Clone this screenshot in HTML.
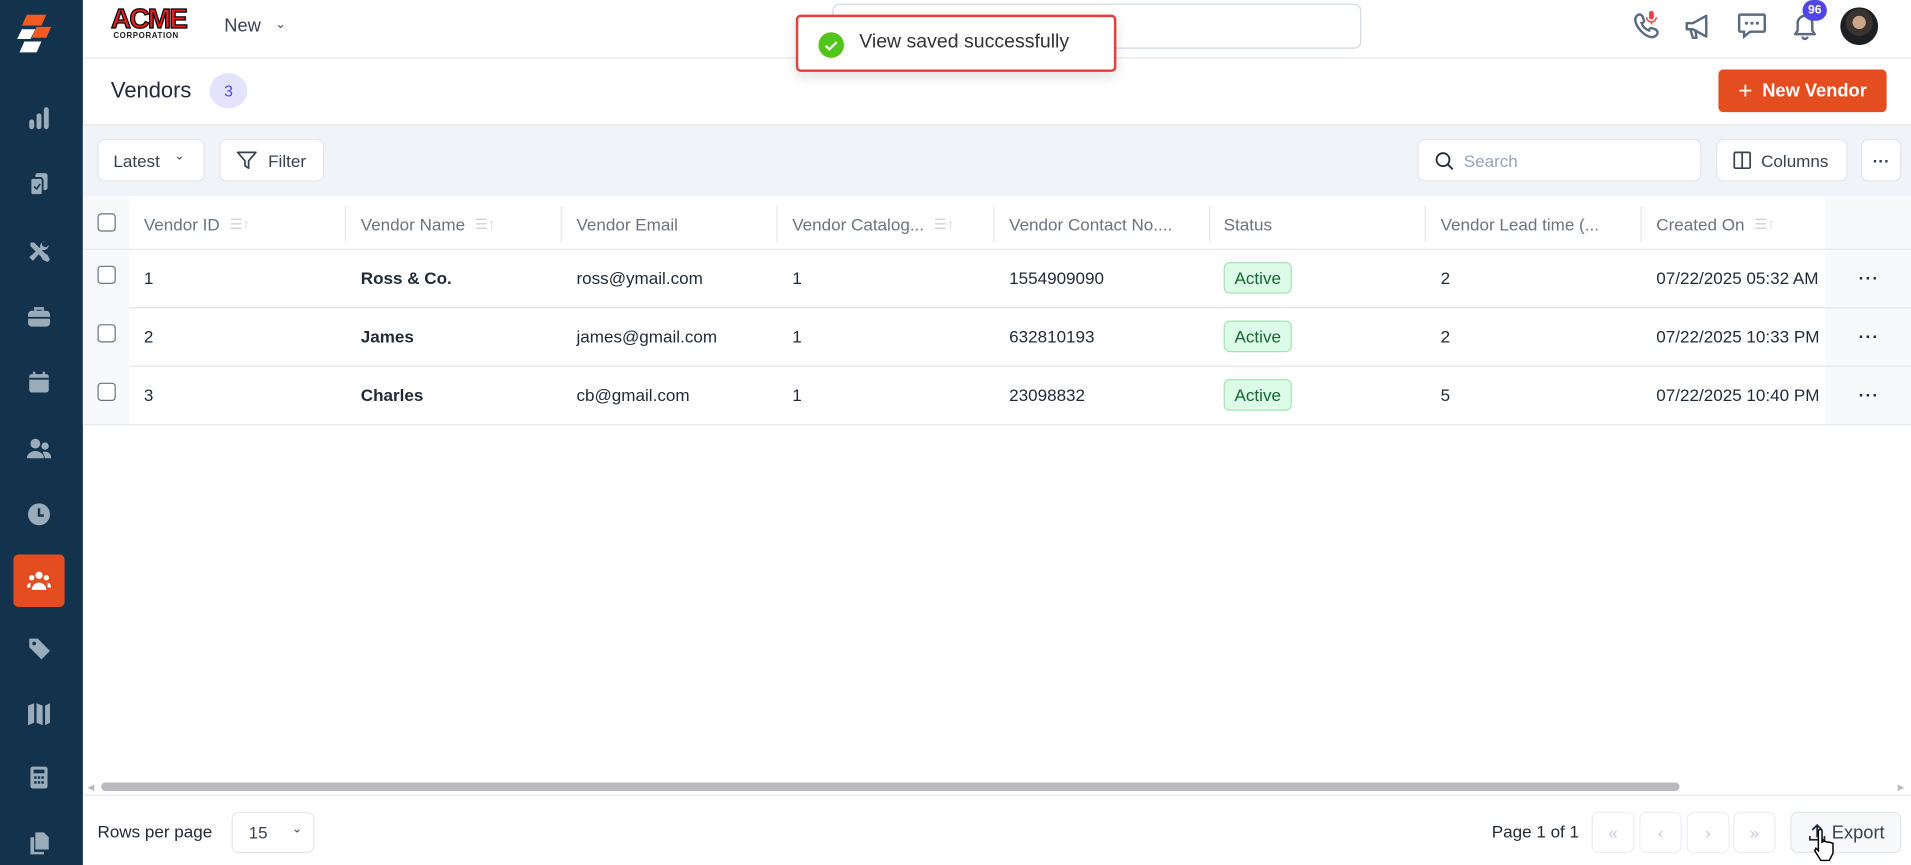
<!DOCTYPE html>
<html><head><meta charset="utf-8"><style>
*{box-sizing:border-box;margin:0;padding:0}
html,body{width:1911px;height:865px;overflow:hidden;background:#fff;font-family:"Liberation Sans",Arial,sans-serif;color:#1f2937}
#w{position:absolute;left:0;top:0;width:1568px;height:710px;transform:scale(1.21875);transform-origin:0 0;overflow:hidden}
.a{position:absolute}
.sb{left:0;top:0;width:68px;height:710px;background:#13334c}
.ic{position:absolute;left:22px;width:20px;height:20px;fill:#9aabba}
.btn{position:absolute;background:#fff;border:1px solid #e2e6ec;border-radius:6px;font-size:14px;color:#374151;display:flex;align-items:center}
.th{position:absolute;top:176px;font-size:14px;color:#6b7280;display:flex;align-items:center;gap:8px}
.sep{position:absolute;top:169px;width:1px;height:30px;background:#e5e7eb}
.td{position:absolute;font-size:14px;color:#1f2937}
.nm{font-weight:bold;color:#1f2937}
.cb{position:absolute;left:80px;width:15px;height:15px;border:1.3px solid #6b7280;border-radius:3px;background:#fff}
.act{position:absolute;left:1004px;width:56px;height:26px;border:1px solid #a7e3b7;background:#dcfce7;color:#166534;border-radius:5px;font-size:14px;text-align:center;line-height:24px}
.dots{position:absolute;left:1525px;font-size:14px;font-weight:bold;letter-spacing:1px}
.pg{position:absolute;top:666px;width:35px;height:34px;border:1px solid #eceef2;border-radius:6px;color:#c5cbd5;text-align:center;line-height:32px;font-size:14px}
.sort{display:inline-block;color:#cbd5e1;font-size:12px}
.dt{width:136px;overflow:hidden;white-space:nowrap}
</style></head><body><div id="w">
<div class="a sb"></div>
<svg class="a" style="left:12px;top:12px" width="40" height="40" viewBox="0 0 40 40"><polygon points="10,0 26,0 22,9 6,9" fill="#f15a22"/><polygon points="18,10 30,10 26,19 14,19" fill="#f15a22"/><polygon points="6,12 17,12 13,20 2,20" fill="#fff"/><polygon points="8,22 22,22 18,31 4,31" fill="#fff"/></svg>
<svg class="ic" style="top:87px" viewBox="0 0 20 20"><rect x="2" y="11" width="4" height="8" rx="2"/><rect x="8" y="6" width="4" height="13" rx="2"/><rect x="14" y="1" width="4" height="18" rx="2"/></svg>
<svg class="ic" style="top:141px" viewBox="0 0 20 20"><rect x="7" y="1" width="10" height="14" rx="2"/><rect x="3" y="5" width="10" height="14" rx="2" stroke="#13334c" stroke-width="1.5"/><path d="M6 12l2 2 3-4" stroke="#13334c" stroke-width="1.3" fill="none"/></svg>
<svg class="ic" style="top:196px" viewBox="0 0 20 20"><path d="M3 3l3 0 9 9 2 1 2 4-2 2-4-2-1-2-9-9z"/><path d="M15 2a4 4 0 0 0-4 5L2 15l3 3 8-9a4 4 0 0 0 5-4l-2 2-3-1-1-3z"/></svg>
<svg class="ic" style="top:250px" viewBox="0 0 20 20"><rect x="1" y="5" width="18" height="13" rx="3"/><path d="M7 5V3h6v2" stroke="#9aabba" stroke-width="2" fill="none"/><rect x="1" y="10" width="18" height="1.5" fill="#13334c"/></svg>
<svg class="ic" style="top:304px" viewBox="0 0 20 20"><rect x="2" y="3" width="16" height="15" rx="2"/><rect x="5" y="1" width="2" height="4"/><rect x="13" y="1" width="2" height="4"/><rect x="2" y="6" width="16" height="1.5" fill="#13334c"/></svg>
<svg class="ic" style="top:358px" viewBox="0 0 20 20"><circle cx="7" cy="6" r="4"/><path d="M0 18a7 6 0 0 1 14 0z"/><circle cx="15" cy="8" r="3"/><path d="M15 18h5a5 5 0 0 0-7-5z"/></svg>
<svg class="ic" style="top:412px" viewBox="0 0 20 20"><circle cx="10" cy="10" r="9"/><path d="M10 5v6h4" stroke="#13334c" stroke-width="2" fill="none"/></svg>
<div class="a" style="left:11px;top:455px;width:42px;height:43px;background:#e44d1f;border-radius:4px"></div>
<svg class="ic" style="top:467px;fill:#fff" viewBox="0 0 20 20"><circle cx="10" cy="5" r="3"/><circle cx="4" cy="7" r="2.2"/><circle cx="16" cy="7" r="2.2"/><path d="M4 17a6 6 0 0 1 12 0z"/><path d="M0 15a4 4 0 0 1 3-4l0 4z M20 15a4 4 0 0 0-3-4l0 4z"/></svg>
<svg class="ic" style="top:522px" viewBox="0 0 20 20"><path d="M2 2h7l10 10-7 7L2 9z"/><circle cx="6" cy="6" r="1.5" fill="#13334c"/></svg>
<svg class="ic" style="top:575px" viewBox="0 0 20 20"><path d="M1 4l5-2v16l-5 2z M8 2l5 2v16l-5-2z M15 4l4-2v16l-4 2z"/></svg>
<svg class="ic" style="top:628px" viewBox="0 0 20 20"><rect x="3" y="1" width="14" height="18" rx="2"/><rect x="5.5" y="3.5" width="9" height="3" fill="#13334c"/><g fill="#13334c"><rect x="6" y="9" width="2" height="2"/><rect x="9" y="9" width="2" height="2"/><rect x="12" y="9" width="2" height="2"/><rect x="6" y="13" width="2" height="2"/><rect x="9" y="13" width="2" height="2"/><rect x="12" y="13" width="2" height="2"/></g></svg>
<svg class="ic" style="top:682px" viewBox="0 0 20 20"><path d="M7 1h7l4 4v10H7z"/><path d="M3 5h3v12h8v2H3z"/></svg>

<div class="a" style="left:68px;top:47px;width:1500px;height:1px;background:#e5e7eb"></div>
<div class="a" style="left:91px;top:2px;font-family:'Liberation Sans',sans-serif;font-weight:900;font-size:23px;color:#e8211a;letter-spacing:-1.5px;line-height:26px;-webkit-text-stroke:1px #000">ACME</div>
<div class="a" style="left:93px;top:26px;font-size:6.5px;font-weight:bold;color:#222;letter-spacing:.5px">CORPORATION</div>
<div class="a" style="left:184px;top:13px;font-size:15px;color:#374151">New <span style="font-size:10px;margin-left:8px;vertical-align:3px">&#8964;</span></div>
<div class="a" style="left:683px;top:3px;width:434px;height:37px;border:1px solid #d1d9e3;border-radius:6px"></div>
<svg class="a" style="left:1339px;top:9px" width="26" height="26" viewBox="0 0 26 26"><path d="M4 4c2-2 4-1 5 1l1 3c0 1-1 2-2 2 1 3 3 5 6 6 0-1 1-2 2-2l3 1c2 1 3 3 1 5-3 3-8 1-12-3S1 7 4 4z" fill="none" stroke="#5b6b80" stroke-width="2"/><rect x="14" y="0" width="4" height="7" rx="2" fill="#ef4444"/><path d="M12 5a4 4 0 0 0 8 0M16 9v2" stroke="#ef4444" fill="none" stroke-width="1.2"/></svg>
<svg class="a" style="left:1382px;top:11px" width="24" height="22" viewBox="0 0 24 22"><path d="M2 8h5l11-6v17L7 13H2z M5 13l2 7h3l-1-7" fill="none" stroke="#5b6b80" stroke-width="2" stroke-linejoin="round"/></svg>
<svg class="a" style="left:1425px;top:10px" width="25" height="24" viewBox="0 0 25 24"><path d="M3 2h19a1 1 0 0 1 1 1v12a1 1 0 0 1-1 1H11l-5 4v-4H3a1 1 0 0 1-1-1V3a1 1 0 0 1 1-1z" fill="none" stroke="#5b6b80" stroke-width="2"/><circle cx="8" cy="9" r="1.3" fill="#5b6b80"/><circle cx="12.5" cy="9" r="1.3" fill="#5b6b80"/><circle cx="17" cy="9" r="1.3" fill="#5b6b80"/></svg>
<svg class="a" style="left:1469px;top:9px" width="24" height="26" viewBox="0 0 24 26"><path d="M4 19h16l-2-3v-6a6 6 0 0 0-12 0v6z M10 21a2 2 0 0 0 4 0" fill="none" stroke="#5b6b80" stroke-width="2" stroke-linejoin="round"/></svg>
<div class="a" style="left:1479px;top:0px;width:20px;height:17px;border-radius:9px;background:#4f46e5;color:#fff;font-size:10px;font-weight:bold;text-align:center;line-height:17px">96</div>
<div class="a" style="left:1510px;top:6px;width:31px;height:31px;border-radius:50%;background:radial-gradient(circle at 50% 40%,#caa58a 0 22%,#3a3330 23% 45%,#1d1f22 46%)"></div>

<div class="a" style="left:91px;top:64px;font-size:18px;color:#1f2937">Vendors</div>
<div class="a" style="left:172px;top:60px;width:31px;height:29px;border-radius:50%;background:#e4e3fb;color:#4f46e5;font-size:13px;text-align:center;line-height:29px">3</div>
<div class="a" style="left:1410px;top:57px;width:138px;height:35px;border-radius:4px;background:#e44d1f;color:#fff;font-size:15px;font-weight:bold;line-height:35px;text-align:center"><span style="font-size:20px;font-weight:normal;vertical-align:-2px;margin-right:8px">+</span>New Vendor</div>
<div class="a" style="left:68px;top:102px;width:1500px;height:1px;background:#e5e7eb"></div>

<div class="a" style="left:68px;top:103px;width:1500px;height:58px;background:#f0f3f8"></div>
<div class="btn" style="left:80px;top:114px;width:88px;height:35px;padding-left:12px">Latest <span style="font-size:10px;margin-left:12px;margin-top:-6px">&#8964;</span></div>
<div class="btn" style="left:180px;top:114px;width:86px;height:35px;padding-left:13px"><svg width="17" height="17" viewBox="0 0 17 17" style="margin-right:9px"><path d="M1 2h15l-6 7v6l-3-2V9z" fill="none" stroke="#374151" stroke-width="1.4" stroke-linejoin="round"/></svg>Filter</div>
<div class="btn" style="left:1163px;top:114px;width:233px;height:35px;padding-left:13px;color:#94a3b8"><svg width="16" height="16" viewBox="0 0 16 16" style="margin-right:8px"><circle cx="7" cy="7" r="5.3" fill="none" stroke="#1f2937" stroke-width="1.5"/><path d="M11 11l4 4" stroke="#1f2937" stroke-width="1.5"/></svg>Search</div>
<div class="btn" style="left:1408px;top:114px;width:108px;height:35px;padding-left:13px"><svg width="15" height="15" viewBox="0 0 15 15" style="margin-right:8px"><rect x="1" y="1" width="13" height="13" rx="1" fill="none" stroke="#374151" stroke-width="1.4"/><path d="M7.5 1v13" stroke="#374151" stroke-width="1.4"/></svg>Columns</div>
<div class="btn" style="left:1527px;top:114px;width:33px;height:35px;justify-content:center;font-weight:bold">···</div>

<div class="a" style="left:68px;top:161px;width:38px;height:187px;background:#f8f9fb"></div>
<div class="a" style="left:1497px;top:161px;width:71px;height:187px;background:#f8f9fb"></div>
<div class="a" style="left:68px;top:204px;width:1500px;height:1px;background:#e2e6ec"></div>
<div class="cb" style="top:175px"></div>
<div class="th" style="left:118px">Vendor ID <span class="sort">☰↑</span></div>
<div class="sep" style="left:283px"></div>
<div class="th" style="left:296px">Vendor Name <span class="sort">☰↑</span></div>
<div class="sep" style="left:460px"></div>
<div class="th" style="left:473px">Vendor Email</div>
<div class="sep" style="left:637px"></div>
<div class="th" style="left:650px">Vendor Catalog... <span class="sort">☰↑</span></div>
<div class="sep" style="left:815px"></div>
<div class="th" style="left:828px">Vendor Contact No....</div>
<div class="sep" style="left:992px"></div>
<div class="th" style="left:1004px">Status</div>
<div class="sep" style="left:1169px"></div>
<div class="th" style="left:1182px">Vendor Lead time (...</div>
<div class="sep" style="left:1346px"></div>
<div class="th" style="left:1359px">Created On <span class="sort">☰↑</span></div>

<div class="a" style="left:106px;top:252px;width:1462px;height:1px;background:#e5e7eb"></div>
<div class="a" style="left:106px;top:300px;width:1462px;height:1px;background:#e5e7eb"></div>
<div class="a" style="left:68px;top:348px;width:1500px;height:1px;background:#e5e7eb"></div>

<div class="cb" style="top:218px"></div><div class="td" style="left:118px;top:220px">1</div><div class="td nm" style="left:296px;top:220px">Ross &amp; Co.</div><div class="td" style="left:473px;top:220px">ross@ymail.com</div><div class="td" style="left:650px;top:220px">1</div><div class="td" style="left:828px;top:220px">1554909090</div><div class="act" style="top:215px">Active</div><div class="td" style="left:1182px;top:220px">2</div><div class="td dt" style="left:1359px;top:220px">07/22/2025 05:32 AM</div><div class="dots" style="top:220px">···</div>

<div class="cb" style="top:266px"></div><div class="td" style="left:118px;top:268px">2</div><div class="td nm" style="left:296px;top:268px">James</div><div class="td" style="left:473px;top:268px">james@gmail.com</div><div class="td" style="left:650px;top:268px">1</div><div class="td" style="left:828px;top:268px">632810193</div><div class="act" style="top:263px">Active</div><div class="td" style="left:1182px;top:268px">2</div><div class="td dt" style="left:1359px;top:268px">07/22/2025 10:33 PM</div><div class="dots" style="top:268px">···</div>

<div class="cb" style="top:314px"></div><div class="td" style="left:118px;top:316px">3</div><div class="td nm" style="left:296px;top:316px">Charles</div><div class="td" style="left:473px;top:316px">cb@gmail.com</div><div class="td" style="left:650px;top:316px">1</div><div class="td" style="left:828px;top:316px">23098832</div><div class="act" style="top:311px">Active</div><div class="td" style="left:1182px;top:316px">5</div><div class="td dt" style="left:1359px;top:316px">07/22/2025 10:40 PM</div><div class="dots" style="top:316px">···</div>

<div class="a" style="left:72px;top:642px;font-size:7px;color:#b8b8bd">◀</div>
<div class="a" style="left:1557px;top:642px;font-size:7px;color:#b8b8bd">▶</div>
<div class="a" style="left:83px;top:642px;width:1295px;height:7px;border-radius:4px;background:#b9b9be"></div>
<div class="a" style="left:68px;top:652px;width:1500px;height:1px;background:#e5e7eb"></div>

<div class="a" style="left:80px;top:674px;font-size:14px;color:#1f2937">Rows per page</div>
<div class="btn" style="left:190px;top:666px;width:68px;height:34px;padding-left:13px">15 <span style="font-size:10px;margin-left:20px;margin-top:-6px">&#8964;</span></div>
<div class="a" style="left:1224px;top:674px;font-size:14px;color:#1f2937">Page 1 of 1</div>
<div class="pg" style="left:1306px">«</div>
<div class="pg" style="left:1345px">‹</div>
<div class="pg" style="left:1384px">›</div>
<div class="pg" style="left:1422px">»</div>
<div class="btn" style="left:1469px;top:666px;width:91px;height:34px;padding-left:13px;background:#f8f9fb;font-size:15px"><svg width="16" height="16" viewBox="0 0 16 16" style="margin-right:4px"><path d="M8 12V2M4 6l4-4 4 4M2 11v3h12v-3" fill="none" stroke="#1f2937" stroke-width="1.4"/></svg>Export</div>
<svg class="a" style="left:1486px;top:680px" width="22" height="28" viewBox="0 0 22 28"><path d="M6 2a1.5 1.5 0 0 1 3 0v9l2-1 2 1 2 0 3 1v8l-3 6H8l-5-8 1-2 2 2z" fill="#fff" stroke="#000" stroke-width="1.2"/></svg>

<div class="a" style="left:653px;top:12px;width:263px;height:47px;border:2.5px solid #e53e3e;border-radius:4px;background:#fff;box-shadow:0 4px 10px rgba(0,0,0,.12)"></div>
<svg class="a" style="left:671px;top:26px" width="22" height="22" viewBox="0 0 22 22"><circle cx="11" cy="11" r="10.5" fill="#52c41a"/><path d="M6.5 11.5l3 3 6-6" fill="none" stroke="#fff" stroke-width="1.8"/></svg>
<div class="a" style="left:705px;top:26px;font-size:16px;color:#333">View saved successfully</div>
</div></body></html>
